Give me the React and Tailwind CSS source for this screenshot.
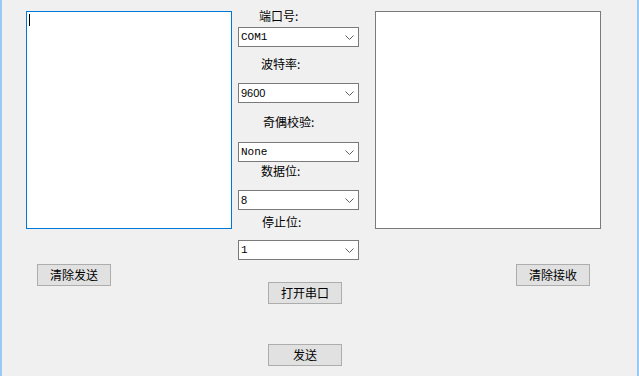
import React from "react";

const cjk = { fontFamily: '"SimSun","Noto Sans CJK SC",sans-serif' };

function Chevron() {
  return (
    <svg width="9" height="6" viewBox="0 0 9 6" className="absolute right-[4px] top-[7px]">
      <path d="M0.5 0.5 L4.5 4.5 L8.5 0.5" fill="none" stroke="#606060" strokeWidth="1" />
    </svg>
  );
}

function Combo({ value, mono, className = "" }) {
  return (
    <div className={"relative h-[20px] w-[121px] border border-[#7a7a7a] bg-white " + className}>
      <span
        className="absolute left-[2px] top-[2px] text-[11px] leading-[14px] text-black"
        style={{
          fontFamily: mono ? '"Liberation Mono",monospace' : '"Liberation Sans",sans-serif',
        }}
      >
        {value}
      </span>
      <Chevron />
    </div>
  );
}

function Label({ text, className = "" }) {
  return (
    <div className={"h-[12px] text-[12px] leading-[12px] text-black " + className} style={cjk}>
      {text}
    </div>
  );
}

function Btn({ text, className = "" }) {
  return (
    <div
      className={
        "flex h-[22px] w-[74px] items-center justify-center border border-[#adadad] bg-[#e1e1e1] text-[12px] leading-[12px] text-black " +
        className
      }
      style={cjk}
    >
      {text}
    </div>
  );
}

export default function App() {
  return (
    <div className="flex h-[376px] w-[639px] items-start overflow-hidden border-l-2 border-r-2 border-l-[#99c9f5] border-r-[#99c9f5] bg-[#f0f0f0]">
      {/* left column */}
      <div className="ml-[24px] flex w-[206px] flex-col">
        <div className="relative mt-[11px] h-[218px] w-[206px] border border-[#0078d7] bg-white">
          <div className="absolute left-[2px] top-[2px] h-[12px] w-[1px] bg-black" />
        </div>
        <Btn text="清除发送" className="ml-[11px] mt-[35px]" />
      </div>

      {/* middle column */}
      <div className="ml-[6px] flex w-[121px] flex-col">
        <Label text="端口号:" className="ml-[21px] mt-[10px]" />
        <Combo value="COM1" mono className="mt-[5px]" />
        <Label text="波特率:" className="ml-[23px] mt-[11px]" />
        <Combo value="9600" className="mt-[13px]" />
        <Label text="奇偶校验:" className="ml-[25px] mt-[13px]" />
        <Combo value="None" mono className="mt-[14px]" />
        <Label text="数据位:" className="ml-[23px] mt-[3px]" />
        <Combo value="8" className="mt-[13px]" />
        <Label text="停止位:" className="ml-[24px] mt-[6px]" />
        <Combo value="1" mono className="mt-[12px]" />
        <Btn text="打开串口" className="ml-[30px] mt-[22px]" />
        <Btn text="发送" className="ml-[30px] mt-[40px]" />
      </div>

      {/* right column */}
      <div className="ml-[16px] flex w-[226px] flex-col">
        <div className="mt-[11px] h-[218px] w-[226px] border border-[#7a7a7a] bg-white" />
        <Btn text="清除接收" className="ml-[141px] mt-[35px]" />
      </div>
    </div>
  );
}
